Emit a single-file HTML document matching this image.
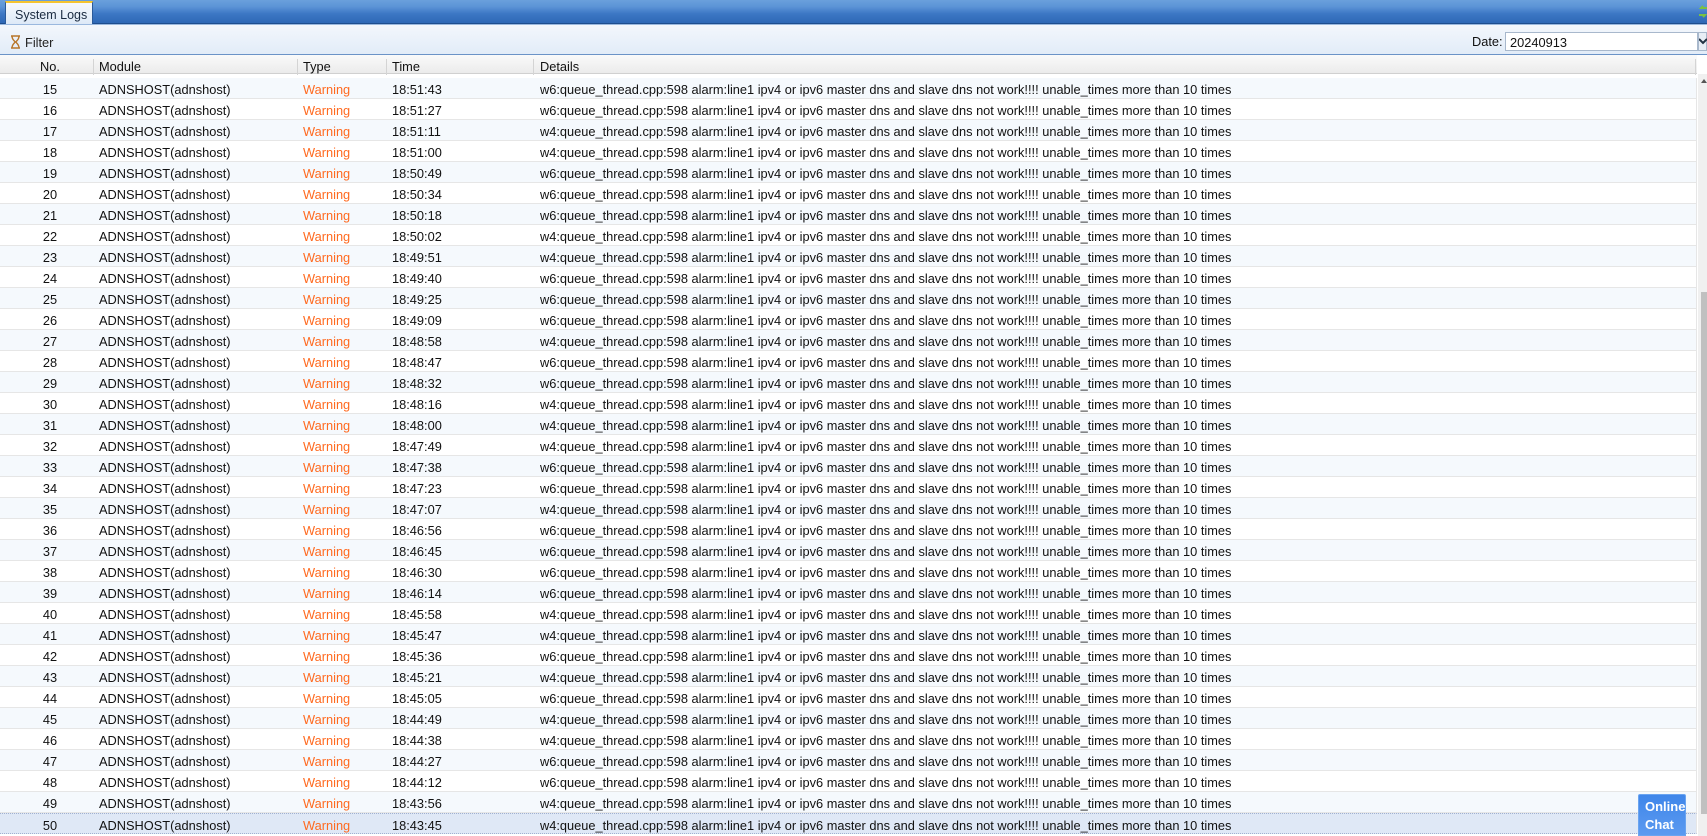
<!DOCTYPE html>
<html><head><meta charset="utf-8">
<style>
*{margin:0;padding:0;box-sizing:border-box}
body{width:1707px;height:836px;overflow:hidden;background:#fff;font-family:"Liberation Sans",sans-serif;font-size:12.8px;color:#111;position:relative}
.tabbar{position:absolute;left:0;top:0;width:1707px;height:24px;background:linear-gradient(#6aa0dc 0,#5b93d6 30%,#3c77c4 60%,#2e68b6 100%);border-bottom:1px solid #1d4d8e}
.tab{position:absolute;left:5px;top:1px;width:88px;height:23px;background:linear-gradient(#f6f9fd,#dde9f7);border:1px solid #2a5a9a;border-bottom:none;border-top:2px solid #f4c430;font-size:12.5px;color:#1a2a40;padding:5px 0 0 9px}
.tool{position:absolute;left:0;top:24px;width:1707px;height:31px;background:linear-gradient(#f3f7fc,#e2ecf8);border-top:1px solid #9ab8de;border-bottom:1px solid #6b93c7}
.filter{position:absolute;left:25px;top:10px;color:#222}
.hg{position:absolute;left:10px;top:10px}
.dl{position:absolute;left:1472px;top:9px;color:#111}
.inp{position:absolute;left:1505px;top:7px;width:193px;height:19px;background:#fff;border:1px solid #a8b8cc;padding:2px 4px;font-size:12.8px}
.dd{position:absolute;left:1698px;top:7px;width:9px;height:19px;background:#e8eef6;border:1px solid #a8b8cc}
.head{position:absolute;left:0;top:55px;width:1697px;height:19px;background:linear-gradient(#fafafa,#ebebeb);border-bottom:1px solid #d0d0d0}
.head div{position:absolute;top:4px}
.vd{position:absolute;top:2px;width:1px;height:16px;background:#d4d4d4}
.row{position:absolute;left:0;width:1697px;height:21px;border-bottom:1px solid #e6e6e6;border-right:1px solid #e6e6e6}
.row.o{background:#f5f9fd}
.row.sel{background:#dfe8f6;border-top:1px dotted #a0b0d0;border-bottom:1px dotted #a0b0d0}
.row span{position:absolute;top:4px;white-space:nowrap}
.n{left:35px;width:30px;text-align:center}
.m{left:99px}.t{left:303px;color:#ff6a20}.tm{left:392px}.d{left:540px}
.sb{position:absolute;left:1698px;top:74px;width:9px;height:762px;background:#f0f0f0}
.th{position:absolute;left:1701px;top:292px;width:6px;height:522px;background:#c0c0c0}
.chat{position:absolute;left:1638px;top:794px;width:48px;height:42px;background:linear-gradient(#3f86ea,#5c9af0);border:1px solid #6aa4f0;color:#fff;font-size:13px;font-weight:bold;padding:3px 0 0 6px;line-height:18px;border-radius:2px 2px 0 0}
</style></head><body>
<div class="tabbar"><div class="tab">System Logs</div>
<svg style="position:absolute;left:1699px;top:5px" width="8" height="14"><path d="M8 3H2l2-2M0 10h6l-2 2" stroke="#7ac143" stroke-width="2" fill="none"/></svg></div>
<div class="tool">
<svg class="hg" width="11" height="14" viewBox="0 0 11 14"><path d="M1 1h9M1 13h9M2 1c0 4 3 5 3 6s-3 2-3 6M9 1c0 4-3 5-3 6s3 2 3 6" stroke="#b8762a" stroke-width="1.4" fill="#e8f0f8"/></svg>
<div class="filter">Filter</div>
<div class="dl">Date:</div>
<div class="inp">20240913</div>
<div class="dd"><svg width="8" height="8" style="position:absolute;left:0;top:5px"><path d="M0 1l4 4 4-4" stroke="#234" stroke-width="2" fill="none"/></svg></div>
</div>
<div class="head">
<div style="left:40px">No.</div><div class="vd" style="left:93px"></div>
<div style="left:99px">Module</div><div class="vd" style="left:297px"></div>
<div style="left:303px">Type</div><div class="vd" style="left:386px"></div>
<div style="left:392px">Time</div><div class="vd" style="left:533px"></div>
<div style="left:540px">Details</div><div class="vd" style="left:1695px"></div>
</div>
<div id="rows"></div>
<div class="sb"></div><div class="th"></div>
<svg style="position:absolute;left:1701px;top:79px" width="6" height="4"><path d="M0 4L3 0 6 4z" fill="#555"/></svg>
<div class="chat">Online<br>Chat</div>
<script>
var d=[["w6","18:51:43"],["w6","18:51:27"],["w4","18:51:11"],["w4","18:51:00"],["w6","18:50:49"],["w6","18:50:34"],["w6","18:50:18"],["w4","18:50:02"],["w4","18:49:51"],["w6","18:49:40"],["w6","18:49:25"],["w6","18:49:09"],["w4","18:48:58"],["w6","18:48:47"],["w6","18:48:32"],["w4","18:48:16"],["w4","18:48:00"],["w4","18:47:49"],["w6","18:47:38"],["w6","18:47:23"],["w4","18:47:07"],["w6","18:46:56"],["w6","18:46:45"],["w6","18:46:30"],["w6","18:46:14"],["w4","18:45:58"],["w4","18:45:47"],["w6","18:45:36"],["w4","18:45:21"],["w6","18:45:05"],["w4","18:44:49"],["w4","18:44:38"],["w6","18:44:27"],["w6","18:44:12"],["w4","18:43:56"],["w4","18:43:45"]];
var h="";
for(var i=0;i<d.length;i++){var c=i==35?"row sel":(i%2==0?"row o":"row");
h+='<div class="'+c+'" style="top:'+(78+i*21)+'px"><span class="n">'+(15+i)+'</span><span class="m">ADNSHOST(adnshost)</span><span class="t">Warning</span><span class="tm">'+d[i][1]+'</span><span class="d">'+d[i][0]+':queue_thread.cpp:598 alarm:line1 ipv4 or ipv6 master dns and slave dns not work!!!! unable_times more than 10 times</span></div>';}
document.getElementById("rows").innerHTML=h;
</script>
</body></html>
